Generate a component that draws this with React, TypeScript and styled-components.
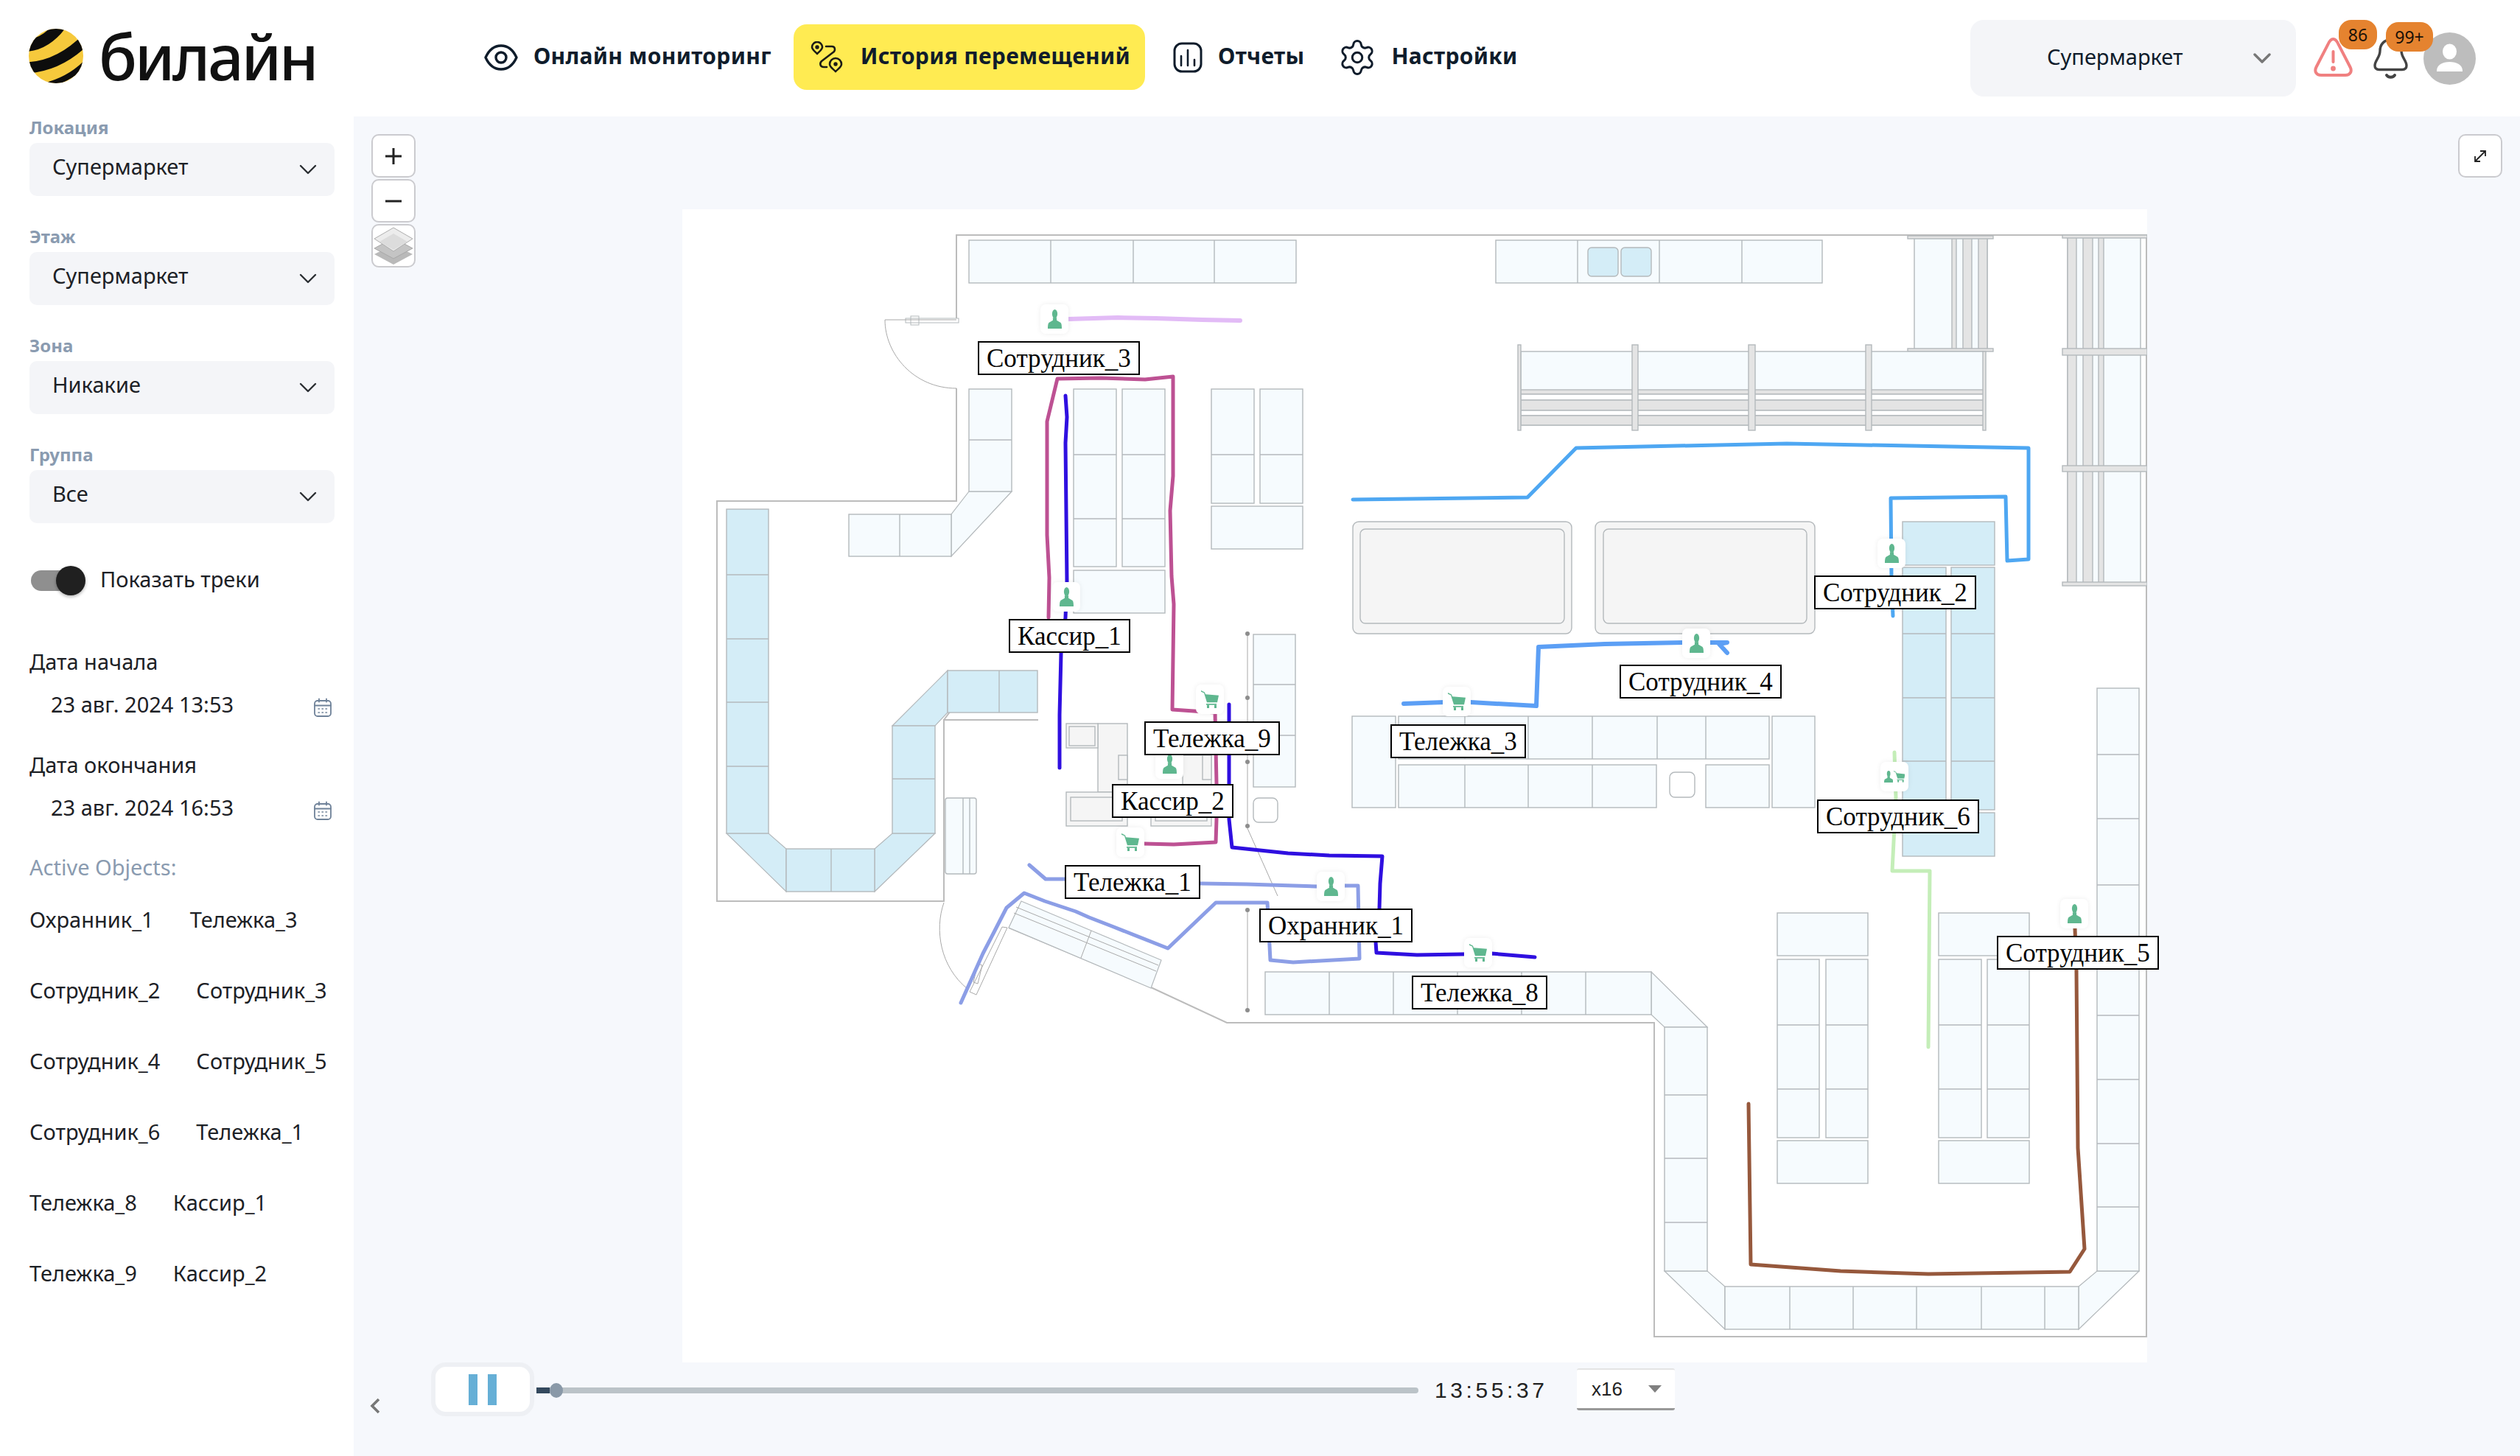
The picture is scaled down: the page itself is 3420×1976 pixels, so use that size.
import React from "react";
import styled, { createGlobalStyle } from "styled-components";
import { Settings } from "lucide-react";

const FONT = `"Noto Sans", "Open Sans", sans-serif`;

const Global = createGlobalStyle`
  html, body { margin: 0; padding: 0; background: #fff; }
  * { box-sizing: border-box; }
`;

const Page = styled.div`
  width: 3420px;
  height: 1976px;
  display: flex;
  flex-direction: column;
  font-family: ${FONT};
  color: #1d2126;
  overflow: hidden;
  background: #fff;
`;

/* ---------- header ---------- */
const Header = styled.header`
  height: 158px;
  flex: none;
  display: flex;
  align-items: center;
  position: relative;
  padding-left: 38px;
  padding-right: 60px;
`;
const Logo = styled.div`
  width: 597px;
  display: flex;
  align-items: center;
  gap: 20px;
  height: 76px;
  margin-bottom: 7px;
`;
const LogoWord = styled.span`
  font-size: 86px;
  line-height: 76px;
  font-weight: 500;
  color: #111;
  letter-spacing: -3.4px;
  font-family: "Noto Sans", sans-serif;
`;
const Nav = styled.nav`
  display: flex;
  align-items: center;
  margin-bottom: 3px;
`;
const NavItem = styled.div<{ $active?: boolean; $gap?: number; $ml?: number }>`
  display: flex;
  align-items: center;
  gap: ${(p) => p.$gap ?? 21}px;
  height: 89px;
  margin-left: ${(p) => p.$ml ?? 0}px;
  padding: 0 ${(p) => (p.$active ? 20 : 22)}px 0 ${(p) => (p.$active ? 23 : 22)}px;
  border-radius: 18px;
  background: ${(p) => (p.$active ? "#ffeb52" : "transparent")};
  color: #0f1c2b;
  font-size: 30px;
  font-weight: 700;
  letter-spacing: 0.3px;
  white-space: nowrap;
`;
const NavLabel = styled.span`
  margin-bottom: 5px;
`;
const HeaderRight = styled.div`
  margin-left: auto;
  display: flex;
  align-items: center;
`;
const LocationSelect = styled.div`
  width: 442px;
  height: 104px;
  border-radius: 18px;
  background: #f4f5f8;
  display: flex;
  align-items: center;
  padding-left: 104px;
  padding-right: 34px;
  justify-content: space-between;
  font-size: 29px;
  color: #0f1c2b;
  margin-right: 23px;
`;
const LocationText = styled.span`
  margin-bottom: 6px;
`;
const AlertWrap = styled.div`
  position: relative;
  width: 55px;
  height: 55px;
  margin-right: 27px;
  margin-bottom: 4px;
`;
const BellWrap = styled.div`
  position: relative;
  width: 47px;
  height: 57px;
  margin-right: 21px;
`;
const Badge = styled.span<{ $left: number; $top: number; $w: number }>`
  position: absolute;
  left: ${(p) => p.$left}px;
  top: ${(p) => p.$top}px;
  width: ${(p) => p.$w}px;
  height: 40px;
  border-radius: 17px;
  background: #e5832f;
  color: #1b1208;
  font-size: 23px;
  display: flex;
  align-items: center;
  justify-content: center;
`;

/* ---------- body ---------- */
const Body = styled.div`
  flex: 1;
  display: flex;
  min-height: 0;
`;
const Sidebar = styled.aside`
  width: 480px;
  flex: none;
  padding: 6px 26px 0 40px;
  display: flex;
  flex-direction: column;
  background: #fff;
`;
const Field = styled.div`
  display: flex;
  flex-direction: column;
  margin-bottom: 46px;
`;
const FieldLabel = styled.label`
  font-size: 24px;
  line-height: 18px;
  padding-bottom: 12px;
  font-weight: 700;
  color: #8a9bb0;
`;
const Select = styled.div`
  height: 72px;
  border-radius: 10px;
  background: #f4f5f8;
  padding: 0 24px 0 31px;
  display: flex;
  align-items: center;
  justify-content: space-between;
  font-size: 29px;
  color: #1d2126;
`;
const SelectText = styled.span`
  margin-bottom: 10px;
`;
const ToggleRow = styled.div`
  display: flex;
  align-items: center;
  height: 40px;
  margin-top: 12px;
  gap: 20px;
  font-size: 29px;
`;
const ToggleText = styled.span`
  margin-bottom: 6px;
`;
const ToggleTrack = styled.div`
  width: 74px;
  height: 40px;
  position: relative;
  margin-left: 2px;
`;
const ToggleBar = styled.div`
  position: absolute;
  left: 0;
  top: 6px;
  width: 60px;
  height: 28px;
  border-radius: 14px;
  background: #8f8f8f;
`;
const ToggleKnob = styled.div`
  position: absolute;
  right: 0;
  top: 0;
  width: 40px;
  height: 40px;
  border-radius: 50%;
  background: #202020;
  box-shadow: 0 2px 4px rgba(0, 0, 0, 0.3);
`;
const DateBlock = styled.div<{ $first?: boolean }>`
  margin-top: ${(p) => (p.$first ? 72 : 25)}px;
`;
const DateLabel = styled.div`
  font-size: 29px;
  line-height: 36px;
`;
const DateValue = styled.div`
  margin-top: 8px;
  height: 71px;
  padding: 0 4px 0 29px;
  display: flex;
  align-items: center;
  justify-content: space-between;
  font-size: 29px;
`;
const DateText = styled.span`
  margin-bottom: 8px;
`;
const ActiveTitle = styled.div`
  margin-top: 24px;
  font-size: 29px;
  line-height: 36px;
  color: #8a9bb0;
`;
const ObjectList = styled.div`
  margin-top: 35px;
  display: flex;
  flex-wrap: wrap;
  column-gap: 49px;
  row-gap: 60px;
`;
const ObjectItem = styled.span`
  font-size: 29px;
  line-height: 36px;
  white-space: nowrap;
`;

/* ---------- main ---------- */
const Main = styled.main`
  flex: 1;
  position: relative;
  background: #f6f8fc;
  display: flex;
  flex-direction: column;
  min-width: 0;
`;
const MapControls = styled.div`
  position: absolute;
  left: 24px;
  top: 24px;
  display: flex;
  flex-direction: column;
  gap: 2px;
`;
const MapButton = styled.div`
  width: 60px;
  height: 59px;
  border: 2px solid #cbcbcf;
  border-radius: 10px;
  background: #fff;
  display: flex;
  align-items: center;
  justify-content: center;
  color: #222;
`;
const FullscreenButton = styled(MapButton)`
  position: absolute;
  left: 2856px;
  top: 24px;
`;
const MapFrame = styled.div`
  position: relative;
  flex: none;
  margin-top: 126px;
  margin-left: 446px;
  width: 1988px;
  height: 1565px;
  background: #fff;
`;
const Plan = styled.svg`
  display: block;
  width: 100%;
  height: 100%;
`;
const Tag = styled.div<{ $x: number; $y: number }>`
  position: absolute;
  left: ${(p) => p.$x - 926}px;
  top: ${(p) => p.$y - 284}px;
  height: 46px;
  padding: 0 10px;
  border: 2px solid #000;
  background: #fff;
  color: #000;
  font-family: "Liberation Serif", "Times New Roman", serif;
  font-size: 35px;
  line-height: 44px;
  white-space: nowrap;
`;
const Marker = styled.div<{ $x: number; $y: number }>`
  position: absolute;
  left: ${(p) => p.$x - 926 - 19}px;
  top: ${(p) => p.$y - 284 - 20}px;
  width: 38px;
  height: 40px;
  border-radius: 7px;
  background: #fff;
  box-shadow: 0 0 7px rgba(0, 0, 0, 0.07);
  display: flex;
  align-items: center;
  justify-content: center;
  gap: 1px;
`;

/* ---------- playback ---------- */
const Playback = styled.div`
  flex: 1;
  display: flex;
  align-items: flex-start;
`;
const BackChevron = styled.div`
  margin-top: 47px;
  margin-left: 21px;
  width: 16px;
  height: 24px;
  display: flex;
`;
const PauseButton = styled.div`
  margin-left: 68px;
  width: 140px;
  height: 73px;
  border: 6px solid #eef0f4;
  border-radius: 20px;
  background: #fff;
  display: flex;
  align-items: center;
  justify-content: center;
  gap: 14px;
`;
const PauseBar = styled.span`
  width: 12px;
  height: 42px;
  background: #66afd6;
`;
const Slider = styled.div`
  position: relative;
  margin-top: 34px;
  margin-left: 3px;
  width: 1197px;
  height: 8px;
  border-radius: 4px;
  background: #bbc3c8;
`;
const SliderFill = styled.div`
  width: 18px;
  height: 100%;
  background: #34495e;
`;
const SliderThumb = styled.div`
  position: absolute;
  left: 18px;
  top: -6px;
  width: 18px;
  height: 20px;
  border-radius: 50%;
  background: #8a99a8;
`;
const TimeText = styled.div`
  margin-top: 20px;
  margin-left: 22px;
  width: 171px;
  font-family: "Liberation Sans", Arial, sans-serif;
  font-size: 30px;
  line-height: 36px;
  letter-spacing: 4.6px;
  color: #222;
`;
const SpeedSelect = styled.div`
  margin-top: 8px;
  margin-left: 22px;
  width: 133px;
  height: 57px;
  background: #fff;
  border-top: 2px solid #e4e4e4;
  border-bottom: 3px solid #999;
  border-radius: 3px;
  display: flex;
  align-items: center;
  justify-content: space-between;
  padding: 0 18px 0 20px;
  font-family: "Liberation Sans", Arial, sans-serif;
  font-size: 26px;
  color: #222;
`;
const SpeedArrow = styled.span`
  width: 0;
  height: 0;
  border-left: 9px solid transparent;
  border-right: 9px solid transparent;
  border-top: 10px solid #808080;
`;

/* ---------- icons ---------- */
const Chevron = ({ color = "#2b2f33", w = 2.4 }: { color?: string; w?: number }) => (
  <svg width="24" height="14" viewBox="0 0 24 14" fill="none">
    <path d="M2 2l10 10L22 2" stroke={color} strokeWidth={w} strokeLinecap="round" strokeLinejoin="round" />
  </svg>
);
const BeeBall = () => (
  <svg width="76" height="76" viewBox="0 0 76 76">
    <defs>
      <clipPath id="ball"><ellipse cx="38" cy="38" rx="37" ry="37" /></clipPath>
    </defs>
    <g clipPath="url(#ball)">
      <rect width="76" height="76" fill="#f6c93c" />
      <path d="M-2 24Q24 22 44 -4" stroke="#0d0d0d" strokeWidth="16" fill="none" />
      <path d="M-2 54Q44 52 82 12" stroke="#0d0d0d" strokeWidth="15" fill="none" />
      <path d="M16 80Q56 72 82 44" stroke="#0d0d0d" strokeWidth="8" fill="none" />
    </g>
  </svg>
);
const EyeIcon = () => (
  <svg width="46" height="36" viewBox="0 0 46 36" fill="none" stroke="#0f1c2b" strokeWidth="3.4">
    <path d="M2 18C7 7 14 2 23 2s16 5 21 16c-5 11-12 16-21 16S7 29 2 18Z" strokeLinejoin="round" />
    <circle cx="23" cy="18" r="7" />
  </svg>
);
const RouteIcon = () => (
  <svg width="44" height="43" viewBox="0 0 44 43" fill="none" stroke="#1c1c16" strokeWidth="2.6" strokeLinecap="round" strokeLinejoin="round">
    <path d="M9 17C5 13 2 11 2 8a7 7 0 0 1 14 0c0 3-3 5-7 9Z" />
    <circle cx="9" cy="8" r="1.4" fill="#1c1c16" />
    <path d="M21 7h8c4 0 5 4 3 7L15 27c-3 3-2 8 3 8h4" />
    <path d="M34 41c-4-4-8-6-8-10a8 8 0 0 1 16 0c0 4-4 6-8 10Z" />
    <circle cx="34" cy="31" r="1.4" fill="#1c1c16" />
  </svg>
);
const ChartIcon = () => (
  <svg width="40" height="42" viewBox="0 0 40 42" fill="none" stroke="#0f1c2b" strokeWidth="3" strokeLinecap="round">
    <rect x="2" y="2" width="36" height="38" rx="10" />
    <path d="M11 19v13M20 11v21M29 24v8" strokeWidth="2.6" />
  </svg>
);
const AlertIcon = () => (
  <svg width="55" height="55" viewBox="0 0 55 55" fill="none" stroke="#f08080" strokeWidth="4" strokeLinecap="round">
    <path d="M27.5 3c3.6 0 5.400 3 7.500 8l15.500 30c3 6 0 11-6.500 11h-33C4.500 52 1.500 47 4.500 41L20 11c2.100-5 3.900-8 7.500-8Z" />
    <path d="M27.500 20v14" />
    <circle cx="27.500" cy="43" r="1.400" fill="#f08080" />
  </svg>
);
const BellIcon = () => (
  <svg width="47" height="57" viewBox="0 0 47 57" fill="none" stroke="#444" strokeWidth="3.4" strokeLinecap="round">
    <path d="M23.500 3C14 3 9 10 9 18c0 9-7 13-7 20 0 3.500 2 5.500 6 5.500h31c4 0 6-2 6-5.500 0-7-7-11-7-20 0-8-5-15-14.500-15Z" />
    <path d="M18 51c2 3.500 9 3.500 11 0" strokeWidth="4" />
  </svg>
);
const Avatar = () => (
  <svg width="71" height="71" viewBox="0 0 71 71">
    <circle cx="35.500" cy="35.500" r="35.500" fill="#bdbdbd" />
    <ellipse cx="35.500" cy="26" rx="9.500" ry="10.500" fill="#fff" />
    <path d="M18 52c0-8 8-12 17.500-12S53 44 53 52v1H18Z" fill="#fff" />
  </svg>
);
const CalendarIcon = () => (
  <svg width="24" height="26" viewBox="0 0 24 26" fill="none" stroke="#6f8299" strokeWidth="1.8" strokeLinecap="round">
    <rect x="1" y="4" width="22" height="21" rx="4" />
    <path d="M1 10.500h22M7 1.500v4M17 1.500v4" />
    <path d="M6 15h1.500M11 15h1.500M16 15h1.500M6 20h1.500M11 20h1.500M16 20h1.500" strokeWidth="1.500" />
  </svg>
);
const LayersIcon = () => (
  <svg width="54" height="52" viewBox="0 0 54 52">
    <path d="M27 24L53 37 27 51 1 37Z" fill="#b9b9b9" />
    <path d="M27 15L53 29 27 43 1 29Z" fill="#c4c4c4" stroke="#a8a8a8" />
    <path d="M27 1L53 16 27 33 1 16Z" fill="#ececec" stroke="#adadad" strokeWidth="1" />
    <path d="M27 9L46 20 27 31 8 20Z" fill="#dcdcdc" />
  </svg>
);
const PlusIcon = () => (
  <svg width="22" height="22" viewBox="0 0 22 22"><path d="M11 0v22M0 11h22" stroke="#222" strokeWidth="3" /></svg>
);
const MinusIcon = () => (
  <svg width="22" height="22" viewBox="0 0 22 22"><path d="M0 11h22" stroke="#222" strokeWidth="3" /></svg>
);
const ExpandIcon = () => (
  <svg width="20" height="20" viewBox="0 0 20 20" fill="none" stroke="#222" strokeWidth="1.800">
    <path d="M3 17L17 3M10 3h7v7M3 10v7h7" />
  </svg>
);
const BackIcon = () => (
  <svg width="16" height="24" viewBox="0 0 16 24" fill="none"><path d="M13 3L4 12l9 9" stroke="#777" strokeWidth="3.600" /></svg>
);
const GREEN = "#5fb78f";
const ManIcon = ({ s = 1 }: { s?: number }) => (
  <svg width={19 * s} height={26 * s} viewBox="0 0 22 28" fill={GREEN} preserveAspectRatio="none">
    <ellipse cx="11" cy="6.500" rx="4.200" ry="6.500" />
    <path d="M8 12h6v4l6 3c1.500 1 2 4 2 9H0c0-5 .500-8 2-9l6-3Z" />
  </svg>
);
const CartIcon = ({ s = 1 }: { s?: number }) => (
  <svg width={24 * s} height={24 * s} viewBox="0 0 24 28" fill={GREEN} preserveAspectRatio="none">
    <path d="M0 0l5 3 1 3 18 2-2 11H8L4 4 0 2Z" />
    <rect x="7" y="21" width="14" height="2" />
    <rect x="8" y="23" width="3" height="5" />
    <rect x="18" y="23" width="3" height="5" />
  </svg>
);

/* ---------- floor plan data (page coordinates) ---------- */
const LIGHT = "#f6fbfe";
const SAT = "#d4edf7";
const GREY = "#e4e4e4";
const SOFT = "#f5f5f5";
const EDGE = "#b4b9bc";
const WALL = "#bcbcbc";

type ShelfT = { x: number; y: number; x2: number; y2: number; f?: string; v?: number[]; h?: number[]; r?: number };
const shelves: ShelfT[] = [
  { x: 1315, y: 326, x2: 1759, y2: 384, v: [1426, 1538, 1648] },
  { x: 2030, y: 326, x2: 2473, y2: 384, v: [2141, 2252, 2364] },
  { x: 2155, y: 336, x2: 2196, y2: 375, f: SAT, r: 5 },
  { x: 2200, y: 336, x2: 2241, y2: 375, f: SAT, r: 5 },
  { x: 1315, y: 528, x2: 1373, y2: 667, h: [597] },
  { x: 1152, y: 698, x2: 1291, y2: 755, v: [1221] },
  { x: 1457, y: 528, x2: 1515, y2: 769, h: [617, 704] },
  { x: 1523, y: 528, x2: 1581, y2: 769, h: [617, 704] },
  { x: 1457, y: 774, x2: 1581, y2: 832 },
  { x: 1644, y: 528, x2: 1702, y2: 683, h: [617] },
  { x: 1710, y: 528, x2: 1768, y2: 683, h: [617] },
  { x: 1644, y: 687, x2: 1768, y2: 745 },
  { x: 1701, y: 861, x2: 1758, y2: 1068, h: [929, 998] },
  { x: 1701, y: 1083, x2: 1734, y2: 1116, f: "#fff", r: 7 },
  { x: 986, y: 691, x2: 1043, y2: 1131, f: SAT, h: [780, 867, 953, 1040] },
  { x: 1067, y: 1152, x2: 1187, y2: 1210, f: SAT, v: [1128] },
  { x: 1211, y: 985, x2: 1269, y2: 1131, f: SAT, h: [1057] },
  { x: 1286, y: 910, x2: 1408, y2: 967, f: SAT, v: [1356] },
  { x: 1283, y: 1083, x2: 1325, y2: 1186, v: [1307, 1316], r: 3 },
  { x: 1717, y: 1319, x2: 2241, y2: 1377, v: [1804, 1891, 1978, 2065, 2152] },
  { x: 2259, y: 1394, x2: 2317, y2: 1725, h: [1486, 1572, 1659] },
  { x: 2341, y: 1746, x2: 2821, y2: 1804, v: [2429, 2515, 2601, 2689, 2775] },
  { x: 2846, y: 934, x2: 2903, y2: 1725, h: [1024, 1111, 1201, 1290, 1378, 1465, 1552, 1638] },
  { x: 2412, y: 1239, x2: 2535, y2: 1297 },
  { x: 2412, y: 1302, x2: 2469, y2: 1544, h: [1391, 1478] },
  { x: 2478, y: 1302, x2: 2535, y2: 1544, h: [1391, 1478] },
  { x: 2412, y: 1548, x2: 2535, y2: 1606 },
  { x: 2631, y: 1239, x2: 2754, y2: 1297 },
  { x: 2631, y: 1302, x2: 2689, y2: 1544, h: [1391, 1478] },
  { x: 2697, y: 1302, x2: 2754, y2: 1544, h: [1391, 1478] },
  { x: 2631, y: 1548, x2: 2754, y2: 1606 },
  { x: 2582, y: 708, x2: 2707, y2: 767, f: SAT },
  { x: 2582, y: 770, x2: 2641, y2: 1099, f: SAT, h: [860, 947, 1033] },
  { x: 2648, y: 770, x2: 2707, y2: 1099, f: SAT, h: [860, 947, 1033] },
  { x: 2582, y: 1103, x2: 2707, y2: 1162, f: SAT },
  { x: 1835, y: 972, x2: 1894, y2: 1096 },
  { x: 1898, y: 972, x2: 2401, y2: 1030, v: [1988, 2074, 2161, 2249, 2315] },
  { x: 1898, y: 1038, x2: 2248, y2: 1096, v: [1988, 2074, 2161] },
  { x: 2315, y: 1038, x2: 2401, y2: 1096 },
  { x: 2405, y: 972, x2: 2463, y2: 1096 },
  { x: 2266, y: 1048, x2: 2300, y2: 1082, f: "#fff", r: 7 },
  /* big counters */
  { x: 1836, y: 708, x2: 2133, y2: 860, f: SOFT, r: 8 },
  { x: 1846, y: 718, x2: 2123, y2: 846, f: SOFT, r: 7 },
  { x: 2165, y: 708, x2: 2463, y2: 860, f: SOFT, r: 8 },
  { x: 2176, y: 718, x2: 2452, y2: 846, f: SOFT, r: 7 },
  /* vertical rack, top */
  { x: 2598, y: 321, x2: 2697, y2: 475 },
  { x: 2649, y: 321, x2: 2655, y2: 475, f: GREY },
  { x: 2664, y: 321, x2: 2676, y2: 475, f: GREY },
  { x: 2685, y: 321, x2: 2697, y2: 475, f: GREY },
  { x: 2589, y: 320, x2: 2705, y2: 324, f: GREY },
  { x: 2589, y: 473, x2: 2705, y2: 477, f: GREY },
  /* vertical rack, right */
  { x: 2806, y: 321, x2: 2905, y2: 793 },
  { x: 2806, y: 321, x2: 2818, y2: 793, f: GREY },
  { x: 2827, y: 321, x2: 2840, y2: 793, f: GREY },
  { x: 2848, y: 321, x2: 2855, y2: 793, f: GREY },
  { x: 2799, y: 319, x2: 2914, y2: 323, f: GREY },
  { x: 2799, y: 473, x2: 2914, y2: 482, f: GREY },
  { x: 2799, y: 632, x2: 2914, y2: 640, f: GREY },
  { x: 2799, y: 790, x2: 2914, y2: 795, f: GREY },
  /* wall fridge, horizontal */
  { x: 2064, y: 477, x2: 2692, y2: 577 },
  { x: 2064, y: 529, x2: 2692, y2: 535, f: GREY },
  { x: 2064, y: 535, x2: 2692, y2: 543, f: "#fff" },
  { x: 2064, y: 543, x2: 2692, y2: 557, f: GREY },
  { x: 2064, y: 557, x2: 2692, y2: 564, f: "#fff" },
  { x: 2064, y: 564, x2: 2692, y2: 577, f: GREY },
  { x: 2060, y: 468, x2: 2064, y2: 584, f: GREY },
  { x: 2215, y: 468, x2: 2223, y2: 584, f: GREY },
  { x: 2373, y: 468, x2: 2382, y2: 584, f: GREY },
  { x: 2532, y: 468, x2: 2540, y2: 584, f: GREY },
  { x: 2691, y: 477, x2: 2695, y2: 584, f: GREY },
  /* cash desks */
  { x: 1490, y: 982, x2: 1530, y2: 1075, f: SOFT },
  { x: 1447, y: 982, x2: 1490, y2: 1015, f: SOFT },
  { x: 1451, y: 986, x2: 1486, y2: 1012, f: SOFT },
  { x: 1518, y: 1025, x2: 1530, y2: 1058, f: SOFT },
  { x: 1447, y: 1075, x2: 1530, y2: 1121, f: SOFT },
  { x: 1453, y: 1082, x2: 1523, y2: 1114, f: SOFT },
  { x: 1605, y: 1025, x2: 1644, y2: 1075, f: SOFT },
  { x: 1632, y: 1025, x2: 1644, y2: 1058, f: SOFT },
  { x: 1562, y: 1075, x2: 1644, y2: 1121, f: SOFT },
  { x: 1568, y: 1082, x2: 1638, y2: 1114, f: SOFT },
];
const polys: { p: string; f: string }[] = [
  { p: "1315,667 1373,667 1291,755 1291,698", f: LIGHT },
  { p: "986,1131 1043,1131 1067,1152 1067,1210", f: SAT },
  { p: "1187,1152 1211,1131 1269,1131 1187,1210", f: SAT },
  { p: "1211,985 1269,985 1286,967 1286,910", f: SAT },
  { p: "2241,1319 2317,1394 2259,1394 2241,1377", f: LIGHT },
  { p: "2259,1725 2317,1725 2341,1746 2341,1804", f: LIGHT },
  { p: "2821,1746 2846,1725 2903,1725 2821,1804", f: LIGHT },
  { p: "1386,1223 1481,1263 1576,1303 1562,1341 1369,1259", f: LIGHT },
];
const wallPaths = [
  "M1298 434V319H2913V1814H2245V1388H1665L1562 1340L1369 1259",
  "M1298 527V680H973V1223H1281V977H1409",
  "M1281 977L1296 957",
];
const thinPaths = [
  "M1201 434H1298",
  "M1201 434C1201 480 1240 527 1298 527",
  "M1281 1225C1268 1262 1276 1312 1313 1342",
  "M1692 1122L1734 1216",
  "M1693 860V1121M1693 1235V1371",
  "M1481 1263L1467 1300",
  "M1379 1231L1572 1310",
  "M1376 1239L1569 1318",
  "M1367 1259L1325 1350L1316 1346L1360 1258Z",
  "M1333 1310L1327 1335L1321 1333L1327 1308Z",
];
const dots = [[1693, 860], [1693, 947], [1693, 1034], [1693, 1121], [1693, 1235], [1693, 1371]];

const tracks: { c: string; w: number; p: string }[] = [
  { c: "#e2bbf6", w: 6, p: "1451,433 1517,431 1569,432 1632,434 1683,435" },
  { c: "#bd5193", w: 5, p: "1423,838 1424,784 1421,726 1421,572 1435,514 1494,513 1554,515 1592,511 1592,646 1588,693 1590,782 1593,820 1591,963 1649,967 1651,1063 1651,1112 1650,1143 1593,1146 1553,1145" },
  { c: "#2f0fe0", w: 5, p: "1446,537 1448,566 1446,601 1448,789 1446,838 1440,887 1438,970 1438,1042" },
  { c: "#2f0fe0", w: 5, p: "1668,956 1668,1065 1668,1112 1672,1150 1748,1158 1804,1161 1876,1162 1873,1199 1872,1233 1867,1278 1868,1293 1923,1296 1983,1295 2024,1294 2083,1299" },
  { c: "#8c9ee6", w: 5, p: "1397,1174 1419,1193 1445,1193 1630,1199 1692,1200 1786,1203 1825,1202 1843,1202 1845,1301 1755,1306 1724,1303 1720,1225 1650,1225 1585,1287 1509,1257 1478,1245 1460,1237 1418,1223 1390,1212 1366,1232 1348,1267 1334,1294 1304,1361" },
  { c: "#4ea7f2", w: 5, p: "1836,678 2073,675 2139,608 2425,602 2753,608 2753,759 2724,761 2722,674 2566,676 2567,784 2569,836" },
  { c: "#5c9ff5", w: 6, p: "1905,955 1960,953 1996,953 2085,958 2088,878 2178,874 2284,872 2344,872 2333,874 2344,886" },
  { c: "#c4eeb8", w: 5, p: "2571,1021 2573,1082 2568,1182 2619,1182 2617,1421" },
  { c: "#96583c", w: 5, p: "2816,1260 2818,1317 2820,1558 2829,1695 2809,1726 2617,1729 2498,1725 2376,1716 2373,1498" },
];

const tags = [
  ["Сотрудник_3", 1327, 463],
  ["Кассир_1", 1369, 840],
  ["Тележка_9", 1553, 979],
  ["Кассир_2", 1509, 1064],
  ["Тележка_1", 1445, 1174],
  ["Охранник_1", 1709, 1233],
  ["Тележка_8", 1916, 1324],
  ["Тележка_3", 1887, 983],
  ["Сотрудник_2", 2462, 781],
  ["Сотрудник_4", 2198, 902],
  ["Сотрудник_6", 2466, 1085],
  ["Сотрудник_5", 2710, 1270],
] as const;
const men = [[1431, 433], [1447, 810], [2567, 751], [2302, 873], [1587, 1037], [1806, 1203], [2815, 1240]];
const carts = [[1642, 949], [1977, 952], [1534, 1143], [2006, 1293]];

const objects = [
  "Охранник_1", "Тележка_3", "Сотрудник_2", "Сотрудник_3", "Сотрудник_4", "Сотрудник_5",
  "Сотрудник_6", "Тележка_1", "Тележка_8", "Кассир_1", "Тележка_9", "Кассир_2",
];
const selects = [
  ["Локация", "Супермаркет"],
  ["Этаж", "Супермаркет"],
  ["Зона", "Никакие"],
  ["Группа", "Все"],
];

const FloorPlan = () => (
  <Plan viewBox="926 284 1988 1565">
    <g fill="none" stroke={WALL} strokeWidth="2">
      {wallPaths.map((d) => <path key={d} d={d} />)}
    </g>
    {polys.map((s) => <polygon key={s.p} points={s.p} fill={s.f} stroke={EDGE} strokeWidth="1.2" />)}
    {shelves.map((s, i) => (
      <g key={i} stroke={EDGE} strokeWidth="1.4">
        <rect x={s.x} y={s.y} width={s.x2 - s.x} height={s.y2 - s.y} rx={s.r ?? 0} fill={s.f ?? LIGHT} />
        {(s.v ?? []).map((x) => <line key={x} x1={x} x2={x} y1={s.y} y2={s.y2} />)}
        {(s.h ?? []).map((y) => <line key={y} x1={s.x} x2={s.x2} y1={y} y2={y} />)}
      </g>
    ))}
    <rect x="1229" y="432" width="72" height="6" fill="#fff" stroke={EDGE} />
    <rect x="1236" y="429" width="11" height="12" fill="none" stroke={EDGE} />
    <g fill="none" stroke="#a9a9a9" strokeWidth="1">
      {thinPaths.map((d) => <path key={d} d={d} />)}
    </g>
    {dots.map(([x, y]) => <circle key={`${x}${y}`} cx={x} cy={y} r="3" fill="#8d8d8d" />)}
    {tracks.map((t) => (
      <polyline key={t.p} points={t.p} fill="none" stroke={t.c} strokeWidth={t.w} strokeLinejoin="round" strokeLinecap="round" />
    ))}
  </Plan>
);

export default function App() {
  return (
    <Page>
      <Global />
      <Header>
        <Logo>
          <BeeBall />
          <LogoWord>билайн</LogoWord>
        </Logo>
        <Nav>
          <NavItem><EyeIcon /><NavLabel>Онлайн мониторинг</NavLabel></NavItem>
          <NavItem $active $gap={24} $ml={8}><RouteIcon /><NavLabel>История перемещений</NavLabel></NavItem>
          <NavItem $ml={16}><ChartIcon /><NavLabel>Отчеты</NavLabel></NavItem>
          <NavItem $ml={1} $gap={19}><Settings size={54} strokeWidth={1.35} color="#0f1c2b" /><NavLabel>Настройки</NavLabel></NavItem>
        </Nav>
        <HeaderRight>
          <LocationSelect>
            <LocationText>Супермаркет</LocationText>
            <Chevron color="#777" w={3.4} />
          </LocationSelect>
          <AlertWrap>
            <AlertIcon />
            <Badge $left={35} $top={-23} $w={52}>86</Badge>
          </AlertWrap>
          <BellWrap>
            <BellIcon />
            <Badge $left={17} $top={-21} $w={64}>99+</Badge>
          </BellWrap>
          <Avatar />
        </HeaderRight>
      </Header>
      <Body>
        <Sidebar>
          {selects.map(([label, value]) => (
            <Field key={label}>
              <FieldLabel>{label}</FieldLabel>
              <Select>
                <SelectText>{value}</SelectText>
                <Chevron />
              </Select>
            </Field>
          ))}
          <ToggleRow>
            <ToggleTrack>
              <ToggleBar />
              <ToggleKnob />
            </ToggleTrack>
            <ToggleText>Показать треки</ToggleText>
          </ToggleRow>
          <DateBlock $first>
            <DateLabel>Дата начала</DateLabel>
            <DateValue><DateText>23 авг. 2024 13:53</DateText><CalendarIcon /></DateValue>
          </DateBlock>
          <DateBlock>
            <DateLabel>Дата окончания</DateLabel>
            <DateValue><DateText>23 авг. 2024 16:53</DateText><CalendarIcon /></DateValue>
          </DateBlock>
          <ActiveTitle>Active Objects:</ActiveTitle>
          <ObjectList>
            {objects.map((o) => <ObjectItem key={o}>{o}</ObjectItem>)}
          </ObjectList>
        </Sidebar>
        <Main>
          <MapFrame>
            <FloorPlan />
            {men.map(([x, y]) => <Marker key={`${x}`} $x={x} $y={y}><ManIcon /></Marker>)}
            {carts.map(([x, y]) => <Marker key={`${x}`} $x={x} $y={y}><CartIcon /></Marker>)}
            <Marker $x={2571} $y={1054}><ManIcon s={0.65} /><CartIcon s={0.65} /></Marker>
            {tags.map(([t, x, y]) => <Tag key={t} $x={x} $y={y}>{t}</Tag>)}
          </MapFrame>
          <MapControls>
            <MapButton><PlusIcon /></MapButton>
            <MapButton><MinusIcon /></MapButton>
            <MapButton><LayersIcon /></MapButton>
          </MapControls>
          <FullscreenButton><ExpandIcon /></FullscreenButton>
          <Playback>
            <BackChevron><BackIcon /></BackChevron>
            <PauseButton><PauseBar /><PauseBar /></PauseButton>
            <Slider>
              <SliderFill />
              <SliderThumb />
            </Slider>
            <TimeText>13:55:37</TimeText>
            <SpeedSelect>x16<SpeedArrow /></SpeedSelect>
          </Playback>
        </Main>
      </Body>
    </Page>
  );
}
